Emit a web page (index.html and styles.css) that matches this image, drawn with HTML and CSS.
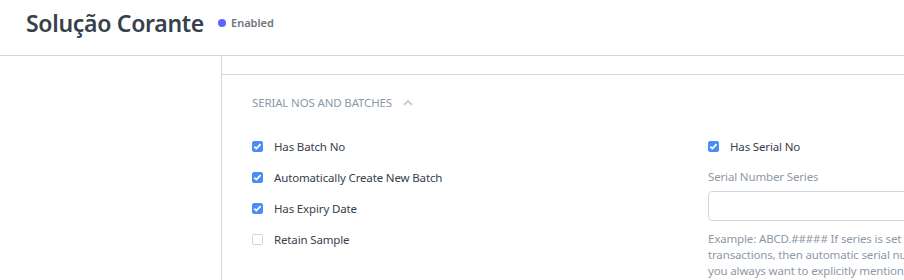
FILE: index.html
```html
<!DOCTYPE html>
<html lang="pt">
<head>
    <meta charset="UTF-8">
    <title>Solução Corante</title>
    <link rel="stylesheet" href="styles.css">
</head>
<body>
    <div class="page-head">
        <h1 class="title">Solução Corante</h1>
        <span class="indicator">Enabled</span>
    </div>

    <div class="layout">
        <div class="sidebar"></div>
        <div class="main">
            <div class="prev-section"></div>
            <div class="section">
                <div class="section-head">
                    SERIAL NOS AND BATCHES
                    <svg class="chevron" width="10" height="7" viewBox="0 0 10 7"><path d="M1 6 L5 2 L9 6" fill="none" stroke="#c8d0d8" stroke-width="2"/></svg>
                </div>
                <div class="columns">
                    <div class="col">
                        <label class="check"><span class="box checked"></span>Has Batch No</label>
                        <label class="check"><span class="box checked"></span>Automatically Create New Batch</label>
                        <label class="check"><span class="box checked"></span>Has Expiry Date</label>
                        <label class="check"><span class="box"></span>Retain Sample</label>
                    </div>
                    <div class="col">
                        <label class="check"><span class="box checked"></span>Has Serial No</label>
                        <div class="field">
                            <div class="field-label">Serial Number Series</div>
                            <div class="input"></div>
                            <p class="help">Example: ABCD.##### If series is set and Serial No is not mentioned in<br>transactions, then automatic serial number will be created based on this series. If<br>you always want to explicitly mention Serial Nos for this item. leave this blank.</p>
                        </div>
                    </div>
                </div>
            </div>
        </div>
    </div>
</body>
</html>
```

FILE: styles.css
```css
* { margin: 0; padding: 0; box-sizing: border-box; }
body { font-family: "Noto Sans", "Open Sans", sans-serif; color: #36414c; background: #fff; width: 904px; height: 280px; overflow: hidden; }

.page-head { height: 56px; display: flex; align-items: center; padding: 0 26px; border-bottom: 1px solid #d1d8dd; }
.title { font-size: 23px; font-weight: 600; color: #36414c; letter-spacing: -0.3px; margin-top: -10px; }
.indicator { display: flex; align-items: center; margin-left: 14px; margin-top: -10px; font-size: 11px; font-weight: 600; color: #6c7680; }
.indicator::before { content: ""; width: 8px; height: 8px; border-radius: 50%; background: #5e64ff; margin-right: 5px; }

.layout { display: flex; height: 224px; }
.sidebar { width: 222px; flex: none; border-right: 1px solid #d1d8dd; }
.main { flex: none; width: 1000px; }
.prev-section { height: 19px; border-bottom: 1px solid #d1d8dd; }

.section { padding: 20px 30px 0; }
.section-head { font-size: 11.5px; letter-spacing: -0.15px; color: #8d99a6; display: flex; align-items: center; height: 14px; }
.chevron { margin-left: 11px; }

.columns { display: grid; grid-template-columns: 456px 456px; margin-top: 30px; }
.check { display: flex; align-items: center; font-size: 11.5px; letter-spacing: -0.15px; color: #36414c; margin-top: -8px; margin-bottom: 8px; }
.col .check { height: 31px; }
.box { width: 11px; height: 11px; border-radius: 2px; border: 1px solid #d1d8dd; margin-right: 11px; flex: none; background: #fff; }
.box.checked { border-color: #4a8ef5; background: #4a8ef5 url("data:image/svg+xml;utf8,<svg xmlns='http://www.w3.org/2000/svg' viewBox='0 0 11 11'><path d='M2.3 5.6 L4.4 7.6 L8.6 3.2' fill='none' stroke='white' stroke-width='1.8'/></svg>") center/11px no-repeat; }

.field { margin-top: -2px; }
.field-label { font-size: 11.5px; letter-spacing: -0.15px; color: #8d99a6; line-height: 18px; margin-bottom: 5px; }
.input { height: 30px; border: 1px solid #d1d8dd; border-radius: 4px; width: 440px; }
.help { font-size: 11.5px; letter-spacing: -0.15px; color: #8d99a6; line-height: 16px; margin-top: 10px; width: 440px; white-space: nowrap; }
```
